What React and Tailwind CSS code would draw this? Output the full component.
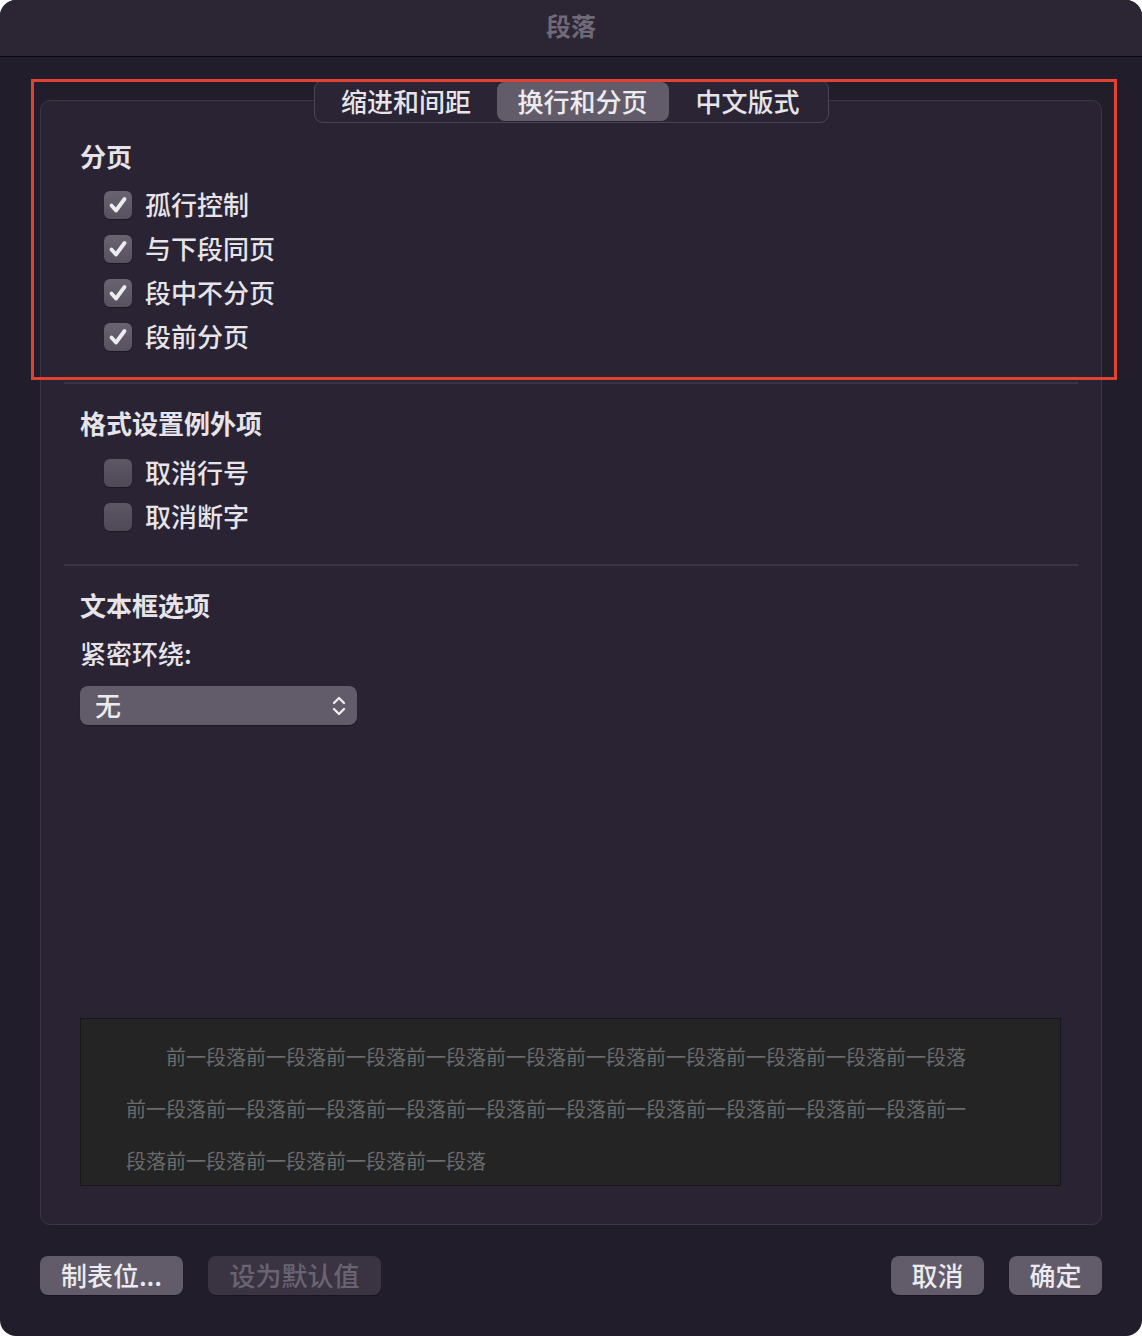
import React from 'react';

const font = { fontFamily: '"Noto Sans CJK SC", "Noto Sans", sans-serif' };

const Check = ({ checked, label }) => (
  <div className="flex items-center h-[44px] pl-[24px]">
    <div
      className={`w-[28px] h-[28px] rounded-[6px] flex items-center justify-center shadow-[0_1px_1px_rgba(0,0,0,0.35)] ${
        checked ? 'bg-gradient-to-b from-[#6a6472] to-[#57515f]' : 'bg-gradient-to-b from-[#5d5765] to-[#4f4957]'
      }`}
    >
      {checked && (
        <svg width="24" height="24" viewBox="0 0 24 24" fill="none">
          <path d="M5.5 12.5l4.5 5L18.5 6" stroke="#ecebee" strokeWidth="3.8" strokeLinecap="round" strokeLinejoin="round" />
        </svg>
      )}
    </div>
    <span className="ml-[13px] text-[26px] leading-[36px] font-medium text-[#e6e4e9] pb-[2px]">{label}</span>
  </div>
);

const Heading = ({ children, className = '' }) => (
  <h2 className={`text-[26px] leading-[36px] font-bold text-[#e6e4e9] ${className}`}>{children}</h2>
);

const Button = ({ children, disabled, className = '' }) => (
  <button
    className={`h-[39px] rounded-[8px] text-[26px] font-medium flex items-center justify-center pb-[3px] shadow-[0_1px_1px_rgba(0,0,0,0.3)] ${
      disabled ? 'bg-[#3a3442] text-[#6a6472]' : 'bg-[#625c6a] text-[#ecebee]'
    } ${className}`}
  >
    {children}
  </button>
);

const previewLines = [
  '前一段落前一段落前一段落前一段落前一段落前一段落前一段落前一段落前一段落前一段落',
  '前一段落前一段落前一段落前一段落前一段落前一段落前一段落前一段落前一段落前一段落前一',
  '段落前一段落前一段落前一段落前一段落',
];

export default function App() {
  return (
    <div className="relative w-[1142px] h-[1336px] bg-white" style={font}>
      <div className="w-full h-full rounded-[16px] overflow-hidden bg-[#221d2b] flex flex-col">
        {/* Title bar */}
        <div className="h-[57px] shrink-0 bg-[#2c2634] border-b border-[#0c0a10] flex items-center justify-center">
          <span className="text-[25px] font-bold text-[#6f6978] -mt-[4px]">段落</span>
        </div>

        {/* Body */}
        <div className="px-[40px] pt-[43px]">
          <div className="h-[1125px] rounded-[10px] border border-[#3c3646] bg-[#292333] flex flex-col">
            {/* Tabs */}
            <div className="-mt-[21px] mx-auto flex p-[1px] rounded-[9px] border border-[#4a4454] bg-[#2a2434] h-[43px]">
              <div className="w-[181px] flex items-center justify-center text-[26px] font-medium text-[#e6e4e9] pb-[3px]">缩进和间距</div>
              <div className="w-[172px] flex items-center justify-center text-[26px] font-medium text-[#ecebee] bg-[#625c6a] rounded-[8px] pb-[3px]">换行和分页</div>
              <div className="w-[158px] flex items-center justify-center text-[26px] font-medium text-[#e6e4e9] pb-[3px]">中文版式</div>
            </div>

            <div className="px-[39px] flex flex-col flex-1">
              <Heading className="mt-[15px]">分页</Heading>
              <div className="mt-[9px]">
                <Check checked label="孤行控制" />
                <Check checked label="与下段同页" />
                <Check checked label="段中不分页" />
                <Check checked label="段前分页" />
              </div>

              <div className="mt-[23px] -mx-[16px] h-[2px] bg-[#3a3444]" />

              <Heading className="mt-[21px]">格式设置例外项</Heading>
              <div className="mt-[10px]">
                <Check label="取消行号" />
                <Check label="取消断字" />
              </div>

              <div className="mt-[25px] -mx-[16px] h-[2px] bg-[#3a3444]" />

              <Heading className="mt-[21px]">文本框选项</Heading>
              <p className="mt-[12px] text-[26px] leading-[36px] font-medium text-[#e6e4e9]">紧密环绕:</p>
              <div className="mt-[15px] w-[277px] h-[39px] rounded-[8px] bg-[#625c6a] flex items-center justify-between pl-[15px] pr-[10px] shadow-[0_1px_1px_rgba(0,0,0,0.3)]">
                <span className="text-[26px] font-medium text-[#ecebee] pb-[3px]">无</span>
                <svg width="16" height="24" viewBox="0 0 16 24" fill="none">
                  <path d="M3 9l5-5 5 5M3 15l5 5 5-5" stroke="#ecebee" strokeWidth="2.4" strokeLinecap="round" strokeLinejoin="round" />
                </svg>
              </div>

              {/* Preview */}
              <div className="mt-auto mb-[38px] h-[168px] w-[981px] bg-[#242424] border border-[#18161b] overflow-hidden pt-[12px] pl-[45px]">
                {previewLines.map((line, i) => (
                  <div
                    key={i}
                    className={`h-[52px] leading-[52px] text-[20px] text-[#6b6b6b] whitespace-nowrap ${i === 0 ? 'pl-[40px]' : ''}`}
                  >
                    {line}
                  </div>
                ))}
              </div>
            </div>
          </div>

          {/* Footer */}
          <div className="mt-[31px] flex items-center">
            <Button className="w-[143px]">制表位...</Button>
            <Button disabled className="ml-[25px] w-[173px]">设为默认值</Button>
            <div className="flex-1" />
            <Button className="w-[93px]">取消</Button>
            <Button className="ml-[25px] w-[93px]">确定</Button>
          </div>
        </div>
      </div>

      {/* Annotation */}
      <div className="absolute left-[31px] top-[79px] w-[1086px] h-[301px] border-[3px] border-[#e0432f] pointer-events-none" />
    </div>
  );
}
